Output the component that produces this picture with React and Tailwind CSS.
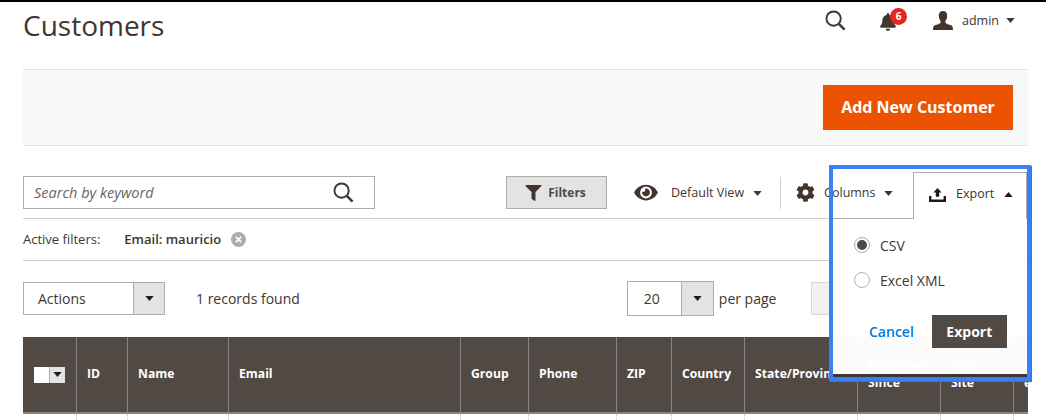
import React from "react";
import { FaCog, FaEye, FaFilter, FaBell } from "react-icons/fa";

const Caret = ({ up = false, className = "" }) => (
  <svg viewBox="0 0 10 6" className={`w-[9px] h-[5px] ${className}`} fill="currentColor">
    <path d={up ? "M0 6 L5 0 L10 6 Z" : "M0 0 L10 0 L5 6 Z"} />
  </svg>
);

const Search = ({ className }) => (
  <svg viewBox="0 0 22 22" className={className} fill="none" stroke="#41362f" strokeWidth="2">
    <circle cx="9" cy="9" r="7.5" />
    <path d="M14.5 14.5 L20.5 20.5" strokeWidth="2.6" />
  </svg>
);

const User = () => (
  <svg viewBox="0 0 20 20" className="w-[20px] h-[20px]" fill="#41362f">
    <path d="M10 0 C13 0 14.4 2 14.2 5 C14.1 7.6 13 9.4 12.2 10.6 C12 11.6 12.6 12.3 14 12.9 L18 14.3 C19.4 14.9 20 16 20 19 L0 19 C0 16 .6 14.9 2 14.3 L6 12.9 C7.4 12.3 8 11.6 7.8 10.6 C7 9.4 5.9 7.6 5.8 5 C5.6 2 7 0 10 0 Z" />
  </svg>
);

const Upload = () => (
  <svg viewBox="0 0 17 14" className="w-[17px] h-[14px]" fill="#1f1a17">
    <path d="M8.5 0 L12.6 4.6 L10.2 4.6 L10.2 8.8 L6.8 8.8 L6.8 4.6 L4.4 4.6 Z" />
    <path d="M0 8 L2.4 8 L2.4 11.4 L14.6 11.4 L14.6 8 L17 8 L17 14 L0 14 Z" />
  </svg>
);

const columns = [
  ["w-[51px]", "ID"],
  ["w-[101px]", "Name"],
  ["w-[232px]", "Email"],
  ["w-[68px]", "Group"],
  ["w-[88px]", "Phone"],
  ["w-[55px]", "ZIP"],
  ["w-[73px]", "Country"],
  ["w-[113px]", "State/Province"],
  ["w-[83px]", "Customer\nSince"],
  ["w-[73px]", "Web\nSite"],
  ["w-[15px]", "Confirmed\nemail"],
];

const tickWidths = ["w-[53px]", "w-[51px]", "w-[101px]", "w-[232px]", "w-[68px]", "w-[88px]", "w-[55px]", "w-[73px]", "w-[113px]", "w-[83px]", "w-[73px]", "w-[15px]"];

export default function App() {
  return (
    <div className="relative w-[1046px] h-[420px] overflow-hidden bg-white border-t-2 border-black text-[#41362f] font-['Open_Sans',sans-serif]">
      {/* Page header */}
      <div className="flex items-start h-[67px] pl-[23px]">
        <h1 className="text-[28px] leading-[38px] mt-[4px] font-normal">Customers</h1>
        <div className="ml-auto flex items-center mt-[8px] mr-[31px]">
          <Search className="w-[21px] h-[21px]" />
          <div className="relative ml-[34px] w-[16px] h-[20px]">
            <FaBell className="w-[16px] h-[18px] mt-[2px] text-[#41362f]" />
            <span className="absolute left-[10px] top-[-3px] w-[17px] h-[17px] rounded-full bg-[#e22626] text-white text-[10px] leading-[17px] font-bold text-center">6</span>
          </div>
          <div className="ml-[37px]"><User /></div>
          <span className="ml-[9px] text-[12.5px] leading-[18px]">admin</span>
          <Caret className="ml-[7px]" />
        </div>
      </div>

      {/* Action bar */}
      <div className="ml-[23px] w-[1005px] h-[77px] flex items-center justify-end bg-[#f8f8f8] border-y border-[#e3e3e3] pr-[15px]">
        <button className="w-[190px] h-[45px] pb-[2px] bg-[#eb5202] text-white text-[16px] font-bold">Add New Customer</button>
      </div>

      {/* Search and view controls */}
      <div className="ml-[23px] w-[1005px] mt-[30px] flex items-center h-[33px]">
        <div className="w-[352px] h-[33px] border border-[#adadad] flex items-center pl-[10px] pr-[20px]">
          <span className="italic text-[14.5px] text-[#6b6460]">Search by keyword</span>
          <Search className="ml-auto w-[21px] h-[21px]" />
        </div>
        <button className="ml-[131px] w-[101px] h-[33px] pt-[1px] pr-[2px] bg-[#e3e3e3] border border-[#adadad] flex items-center justify-center text-[12px] font-bold text-[#514943]">
          <FaFilter className="w-[17px] h-[16px] mr-[6px] text-[#41362f]" />
          Filters
        </button>
        <FaEye className="ml-[27px] w-[24px] h-[21px] text-[#41362f]" />
        <span className="ml-[13px] mt-[2px] text-[12.5px]">Default View</span>
        <Caret className="ml-[9px] mt-[2px]" />
        <div className="ml-[18px] w-px h-[32px] bg-[#d1d1d1]" />
        <FaCog className="ml-[15px] w-[19px] h-[19px] text-[#41362f]" />
        <span className="ml-[9px] mt-[1px] text-[12.5px]">Columns</span>
        <Caret className="ml-[8px] mt-[1px]" />
      </div>

      {/* Active filters */}
      <div className="ml-[23px] w-[1005px] mt-[9px] h-[43px] flex items-center border-y border-[#cccccc] text-[13px]">
        <span>Active filters:</span>
        <span className="ml-[24px] font-semibold">Email: mauricio</span>
        <span className="ml-[10px] w-[15px] h-[15px] rounded-full bg-[#adadad] flex items-center justify-center">
          <svg viewBox="0 0 8 8" className="w-[7px] h-[7px]" stroke="white" strokeWidth="2"><path d="M1 1 L7 7 M7 1 L1 7" /></svg>
        </span>
        <span className="ml-auto mr-[16px] font-semibold text-[#007bdb]">Clear all</span>
      </div>

      {/* Mass actions and pagination */}
      <div className="ml-[23px] w-[1005px] mt-[21px] h-[33px] flex items-center">
        <div className="w-[142px] h-[33px] border border-[#adadad] flex items-stretch">
          <span className="flex-1 pl-[14px] text-[14px] leading-[31px]">Actions</span>
          <span className="w-[31px] bg-[#e3e3e3] border-l border-[#adadad] flex items-center justify-center text-[#1f1a17]"><Caret /></span>
        </div>
        <span className="ml-[31px] text-[14px]">1 records found</span>
        <div className="ml-[327px] w-[87px] h-[35px] border border-[#adadad] flex items-stretch">
          <span className="flex-1 pl-[16px] text-[14px] leading-[33px]">20</span>
          <span className="w-[32px] bg-[#e3e3e3] border-l border-[#adadad] flex items-center justify-center text-[#1f1a17]"><Caret /></span>
        </div>
        <span className="ml-[5px] text-[14px]">per page</span>
        <div className="ml-[35px] w-[74px] h-[33px] bg-[#f0f0f0] border border-[#d8d8d8]" />
        <div className="h-[33px] w-[42px] border border-[#e3e3e3] text-center text-[13px] leading-[31px] text-[#adadad]">1</div>
        <span className="ml-[12px] text-[13px] text-[#adadad]">of 1</span>
      </div>

      {/* Table header */}
      <div className="ml-[23px] w-[1005px] mt-[22px] h-[77px] flex bg-[#514943] border-b-2 border-[#8a837f] text-white text-[12.2px] font-bold leading-[18px]">
        <div className="w-[53px] flex items-center pl-[11px]">
          <div className="flex h-[16px] w-[31px] bg-white">
            <span className="w-[15px]" />
            <span className="flex-1 bg-[#e3e3e3] border-l border-[#adadad] flex items-center justify-center text-[#1f1a17]"><Caret /></span>
          </div>
        </div>
        {columns.map(([w, label]) => (
          <div key={label} className={`${w} border-l border-[#8a837f] pl-[10px] pb-[2px] overflow-hidden flex items-center whitespace-pre`}>
            {label}
          </div>
        ))}
      </div>
      <div className="ml-[23px] flex h-[6px]">
        {tickWidths.map((w, i) => (
          <div key={i} className={`${w} ${i ? "border-l border-dotted border-[#cccccc]" : ""}`} />
        ))}
      </div>

      {/* Highlighted export dropdown, lying over the page */}
      <div className="absolute left-[829px] top-[163px] w-[202px] h-[216px] border-[4px] border-[#3a7ff6] shadow-[1px_1px_0_#e23b3b]">
        <div className="absolute left-0 right-0 bottom-0 h-[3px] bg-[#41362f]" />
        <div className="absolute right-0 top-[3px] w-[114px] h-[47px] pb-[3px] bg-white border border-b-0 border-[#adadad] flex items-center pl-[15px] z-10">
          <Upload />
          <span className="ml-[10px] text-[12.5px]">Export</span>
          <Caret up className="ml-[10px] text-[#1f1a17]" />
        </div>
        <div className="absolute left-0 right-0 top-[49px] bottom-[3px] bg-white/[0.98] border-t border-[#adadad] pl-[21px] pt-[16px]">
          <label className="flex items-center h-[20px] text-[14px]">
            <span className="w-[16px] h-[16px] rounded-full border border-[#adadad] flex items-center justify-center">
              <span className="w-[10px] h-[10px] rounded-full bg-[#514943]" />
            </span>
            <span className="ml-[10px]">CSV</span>
          </label>
          <label className="flex items-center h-[20px] mt-[15px] text-[14px]">
            <span className="w-[16px] h-[16px] rounded-full border border-[#adadad]" />
            <span className="ml-[10px]">Excel XML</span>
          </label>
          <div className="flex items-center mt-[25px]">
            <span className="ml-[15px] text-[14px] font-semibold text-[#007bdb]">Cancel</span>
            <button className="ml-[18px] w-[75px] h-[33px] bg-[#514943] text-white text-[14px] font-bold">Export</button>
          </div>
        </div>
      </div>
    </div>
  );
}
